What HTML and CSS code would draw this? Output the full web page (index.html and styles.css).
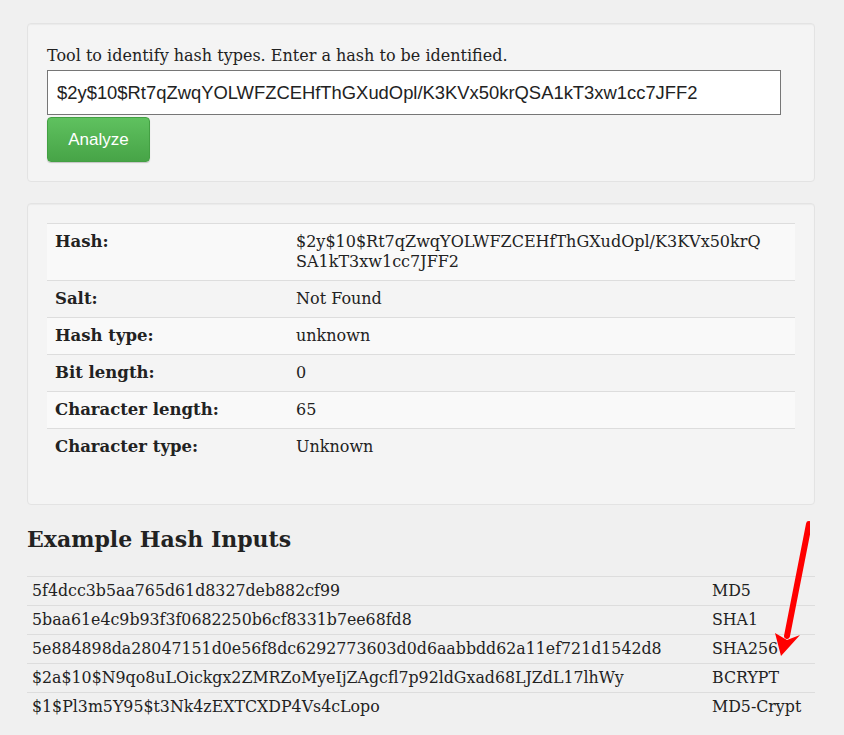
FILE: index.html
```html
<!DOCTYPE html>
<html lang="en">
<head>
<meta charset="utf-8">
<title>Hash Identifier</title>
<link rel="stylesheet" href="styles.css">
</head>
<body>
<div class="page">
  <div class="well">
    <label class="intro" for="hash">Tool to identify hash types. Enter a hash to be identified.</label>
    <input id="hash" class="hash-input" type="text" value="$2y$10$Rt7qZwqYOLWFZCEHfThGXudOpl/K3KVx50krQSA1kT3xw1cc7JFF2">
    <button class="btn-analyze" type="button">Analyze</button>
  </div>

  <div class="well well-result">
    <table class="result">
      <tr><th>Hash:</th><td class="hash-val">$2y$10$Rt7qZwqYOLWFZCEHfThGXudOpl/K3KVx50krQ<br>SA1kT3xw1cc7JFF2</td></tr>
      <tr><th>Salt:</th><td>Not Found</td></tr>
      <tr><th>Hash type:</th><td>unknown</td></tr>
      <tr><th>Bit length:</th><td>0</td></tr>
      <tr><th>Character length:</th><td>65</td></tr>
      <tr><th>Character type:</th><td>Unknown</td></tr>
    </table>
  </div>

  <h3 class="examples-title">Example Hash Inputs</h3>
  <table class="examples">
    <tr><td>5f4dcc3b5aa765d61d8327deb882cf99</td><td class="type">MD5</td></tr>
    <tr><td>5baa61e4c9b93f3f0682250b6cf8331b7ee68fd8</td><td class="type">SHA1</td></tr>
    <tr><td>5e884898da28047151d0e56f8dc6292773603d0d6aabbdd62a11ef721d1542d8</td><td class="type">SHA256</td></tr>
    <tr><td>$2a$10$N9qo8uLOickgx2ZMRZoMyeIjZAgcfl7p92ldGxad68LJZdL17lhWy</td><td class="type">BCRYPT</td></tr>
    <tr><td>$1$Pl3m5Y95$t3Nk4zEXTCXDP4Vs4cLopo</td><td class="type">MD5-Crypt</td></tr>
  </table>

  <svg class="arrow" width="40" height="150" viewBox="0 0 40 150" aria-hidden="true">
    <line x1="39" y1="9" x2="17" y2="121" stroke="#ff0000" stroke-width="6" stroke-linecap="round"/>
    <polygon points="11,141 5,118 17,125 30,120" fill="#ff0000"/>
  </svg>
</div>
</body>
</html>
```
FILE: styles.css
```css
html, body {
  margin: 0;
  padding: 0;
}
body {
  background: #f0f0f0;
  color: #222222;
  font-family: "DejaVu Serif", "Liberation Serif", serif;
  font-size: 16px;
  line-height: 20px;
}
.page {
  position: relative;
  width: 788px;
  padding: 23px 0 0 27px;
}
.well {
  background: #f4f4f4;
  border: 1px solid #e3e3e3;
  border-radius: 4px;
  box-shadow: inset 0 1px 1px rgba(0,0,0,0.04);
  padding: 19px;
  margin-bottom: 21px;
}
.intro {
  display: block;
  padding-top: 3px;
  margin-bottom: 4px;
}
.hash-input {
  display: block;
  box-sizing: border-box;
  width: 734px;
  height: 45px;
  margin: 0;
  padding: 0 9px;
  border: 1px solid #767676;
  border-radius: 0;
  background: #fff;
  color: #222;
  font-family: "Liberation Sans", Arial, sans-serif;
  font-size: 18.4px;
  outline: none;
}
.btn-analyze {
  display: block;
  box-sizing: border-box;
  width: 103px;
  height: 45px;
  margin-top: 2px;
  padding: 0;
  border: 1px solid #43a043;
  border-radius: 4px;
  background: linear-gradient(#5fc15f, #47a447);
  color: #fff;
  font-family: "Liberation Sans", Arial, sans-serif;
  font-size: 17px;
  box-shadow: 0 1px 1px rgba(0,0,0,0.2);
}
.well-result {
  padding-bottom: 19px;
}
.result {
  width: 100%;
  border-collapse: collapse;
  margin-bottom: 20px;
}
.result th, .result td {
  border-top: 1px solid #dddddd;
  padding: 8px;
  text-align: left;
  vertical-align: top;
}
.result th {
  width: 225px;
  font-weight: bold;
  font-size: 16.5px;
}
.result tr:nth-child(odd) {
  background: #f9f9f9;
}
.hash-val {
  word-break: break-all;
}
.examples-title {
  margin: 20px 0 24px;
  font-size: 22px;
  line-height: 26px;
  font-weight: bold;
}
.examples {
  width: 100%;
  border-collapse: collapse;
  font-size: 15.8px;
}
.examples td {
  border-top: 1px solid #dddddd;
  padding: 4px 5px;
  vertical-align: top;
  white-space: nowrap;
}
.examples td.type {
  width: 98px;
}
.arrow {
  position: absolute;
  left: 770px;
  top: 515px;
}
```
